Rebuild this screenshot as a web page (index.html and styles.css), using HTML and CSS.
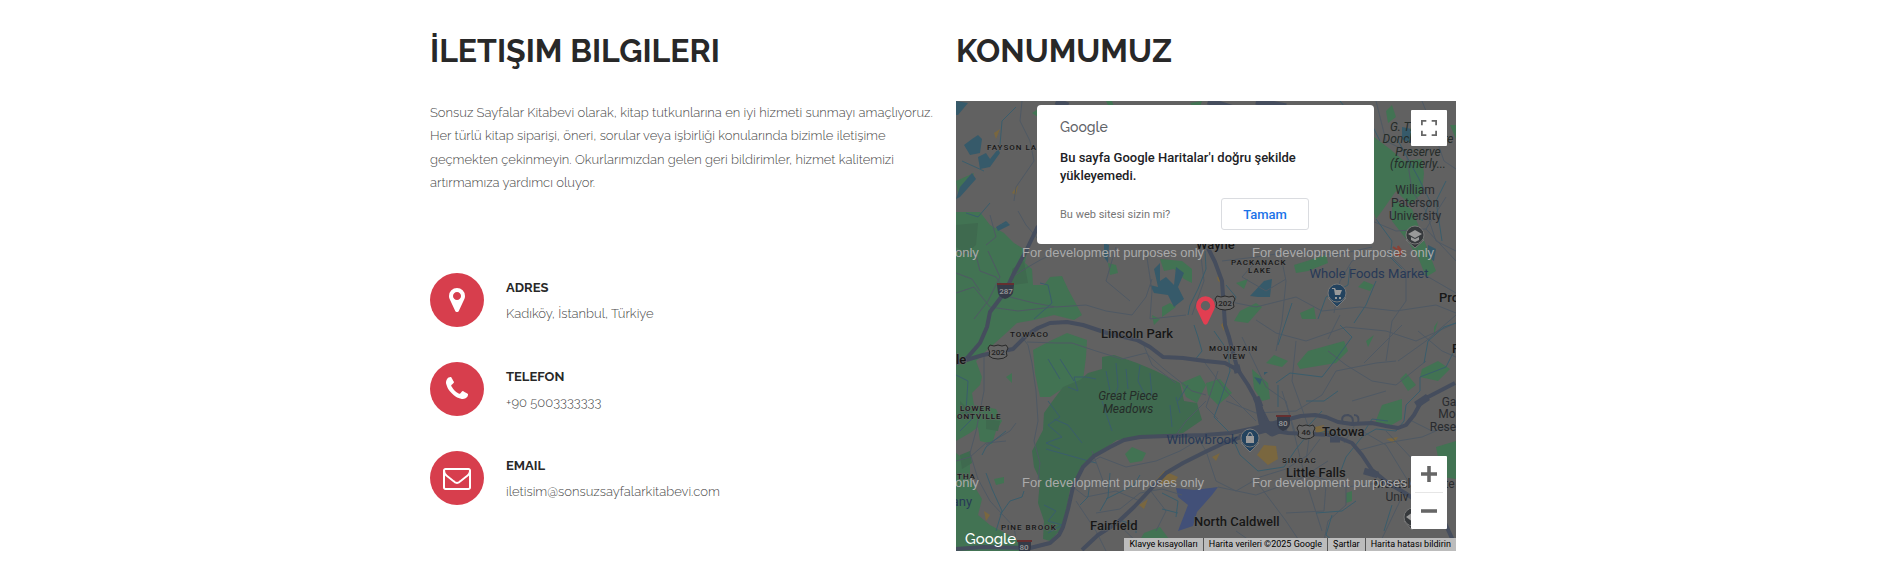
FILE: index.html
```html
<!DOCTYPE html>
<html lang="tr">
<head>
<meta charset="utf-8">
<meta name="viewport" content="width=device-width, initial-scale=1">
<title>İletişim</title>
<link rel="stylesheet" href="styles.css">
</head>
<body>
<main class="contact">
  <section class="column">
    <h2 class="heading">İLETIŞIM BILGILERI</h2>
    <p class="intro">Sonsuz Sayfalar Kitabevi olarak, kitap tutkunlarına en iyi hizmeti sunmayı amaçlıyoruz. Her türlü kitap siparişi, öneri, sorular veya işbirliği konularında bizimle iletişime geçmekten çekinmeyin. Okurlarımızdan gelen geri bildirimler, hizmet kalitemizi artırmamıza yardımcı oluyor.</p>
    <ul class="info-list">
      <li class="info">
        <span class="info-icon"><svg viewBox="0 0 1792 1792" aria-hidden="true"><path d="M1152 640q0-106-75-181t-181-75-181 75-75 181 75 181 181 75 181-75 75-181zm256 0q0 109-33 179l-364 774q-16 33-47.5 52t-67.5 19-67.5-19-46.5-52l-365-774q-33-70-33-179 0-212 150-362t362-150 362 150 150 362z"/></svg></span>
        <div class="info-body"><h3 class="info-title">ADRES</h3><p class="info-text">Kadıköy, İstanbul, Türkiye</p></div>
      </li>
      <li class="info">
        <span class="info-icon"><svg viewBox="0 0 1792 1792" aria-hidden="true"><path d="M1600 1240q0 27-10 70.5t-21 68.5q-21 50-122 106-94 51-186 51-27 0-53-3.5t-57.5-12.5-47-14.5-55.5-20.5-49-18q-98-35-175-83-127-79-264-216t-216-264q-48-77-83-175-3-9-18-49t-20.5-55.5-14.5-47-12.5-57.5-3.5-53q0-92 51-186 56-101 106-122 25-11 68.5-21t70.5-10q14 0 21 3 18 6 53 76 11 19 30 54t35 63.5 31 53.5q3 4 17.5 25t21.5 35.5 7 28.5q0 20-28.5 50t-62 55-62 53-28.5 46q0 9 5 22.5t8.5 20.5 14 24 11.5 19q76 137 174 235t235 174q2 1 19 11.5t24 14 20.5 8.5 22.5 5q18 0 46-28.5t53-62 55-62 50-28.5q14 0 28.5 7t35.5 21.5 25 17.5q25 15 53.5 31t63.5 35 54 30q70 35 76 53 3 7 3 21z"/></svg></span>
        <div class="info-body"><h3 class="info-title">TELEFON</h3><p class="info-text">+90 5003333333</p></div>
      </li>
      <li class="info">
        <span class="info-icon"><svg viewBox="0 0 1792 1792" aria-hidden="true"><path d="M1664 1504v-768q-32 36-69 66-268 206-426 338-51 43-83 67t-86.5 48.5-102.5 24.5h-2q-48 0-102.5-24.5t-86.5-48.5-83-67q-158-132-426-338-37-30-69-66v768q0 13 9.5 22.5t22.5 9.5h1472q13 0 22.5-9.5t9.5-22.5zm0-1051v-24.5l-.5-13-3-12.5-5.5-9-9-7.5-14-2.5h-1472q-13 0-22.5 9.5t-9.5 22.5q0 168 147 284 193 152 401 317 6 5 35 29.5t46 37.5 44.5 31.5 50.5 27.5 43 9h2q20 0 43-9t50.5-27.5 44.5-31.5 46-37.5 35-29.5q208-165 401-317 54-43 100.5-115.5t46.5-131.5zm128-37v1088q0 66-47 113t-113 47h-1472q-66 0-113-47t-47-113v-1088q0-66 47-113t113-47h1472q66 0 113 47t47 113z"/></svg></span>
        <div class="info-body"><h3 class="info-title">EMAIL</h3><p class="info-text">iletisim@sonsuzsayfalarkitabevi.com</p></div>
      </li>
    </ul>
  </section>

  <section class="column">
    <h2 class="heading">KONUMUMUZ</h2>
    <div class="map">
      <svg class="map-canvas" viewBox="0 0 500 450" preserveAspectRatio="xMidYMid slice" role="img" aria-label="Harita">
        <rect width="500" height="450" class="land"/>
        <g class="green">
          <path d="M0 111L24 111 34 124 48 132 58 142 71 150 69 162 76 168 77 184 88 184 94 176 106 175 112 188 126 214 118 219 98 214 78 219 61 222 48 234 30 250 20 260 26 276 24 284 16 292 18 304 40 308 46 320 40 330 36 343 24 340 22 326 14 332 0 340Z"/>
          <path d="M0 352L14 362 14 378 26 398 22 414 34 424 60 438 66 450 0 450Z"/>
          <path d="M77 249L94 240 111 232 131 239 130 256 127 279 109 286 94 296 84 296 79 272Z"/>
          <path class="park" d="M124 279L132 272 146 268 146 256 158 254 181 262 200 270 224 282 228 300 241 302 246 319 227 332 194 336 161 339 136 356 122 374 114 389 107 426 94 440 87 438 88 420 82 402 84 379 78 366 76 350 87 329 88 312 98 298 107 286Z"/>
          <path d="M225 282L244 274 250 284 241 302 230 296ZM152 162L160 164 162 172 154 174ZM204 158L226 160 236 168 236 182 228 178 218 168 208 170ZM206 206L214 202 220 206 206 216ZM196 214L204 218 198 224ZM176 346L190 352 186 360 174 362 169 353ZM188 432L204 426 222 450 180 446Z"/>
          <path d="M418 36L434 48 448 60 466 58 468 72 466 92 454 104 440 90 426 110 420 118 414 100ZM436 98L456 108 480 170 470 176 462 156 450 138 436 120ZM494 24L500 24 500 38Z"/>
          <path d="M338 164L370 154 372 162 352 170 340 172ZM284 210L300 202 306 206 292 222 278 220ZM344 212L358 206 360 218 346 218ZM408 180L418 184 414 190 402 186ZM280 182L292 178 288 188ZM478 226L482 220 478 234ZM410 240L418 234 412 246Z"/>
          <path d="M341 263L352 250 388 240 392 250 380 262 356 266 344 268ZM310 262L318 254 332 260 326 266ZM296 268L312 282 314 298 306 300 298 288ZM250 282L264 278 276 292 262 304 252 294ZM419 322L426 304 446 298 446 318 432 326ZM444 278L450 272 460 284 452 290ZM466 268L482 260 494 268 482 280 464 276ZM480 346L500 340 500 378 486 376ZM390 392L396 390 396 400 390 402Z"/>
          <path d="M150 0L156 0 158 6 152 4ZM76 12L82 8 82 16ZM0 80L18 72 14 84 2 92ZM430 10L436 4 440 16 432 22ZM50 276L56 272 56 282ZM38 378L48 376 48 382 40 384ZM234 2L246 0 242 12Z"/>
        </g>
        <g class="park">
          <path d="M0 124L22 122 20 144 10 152 0 146ZM56 168L68 160 72 182 56 184ZM4 300L14 310 20 306 14 316 4 312ZM30 318L44 320 42 330 30 328ZM4 354L14 350 16 362 6 368Z"/>
        </g>
        <g class="water">
          <path d="M8 44L16 38 22 34 26 38 24 52 14 54ZM22 56L30 52 34 58 42 48 44 52 34 66 24 68ZM0 0L12 2 2 14 0 14ZM40 126L50 120 54 124 42 130ZM16 72L4 86 0 98 4 96 20 78Z"/>
          <path d="M198 168L204 162 204 180 210 176 218 184 220 166 228 172 222 186 228 198 218 206 212 194 198 192 194 184 202 186ZM148 142L153 144 152 162 148 156ZM308 180L316 178 314 196 302 196 294 195ZM308 271L312 271 308 274ZM472 144L480 148 478 160 472 156ZM446 26L456 28 454 42 446 38ZM298 276L306 278 304 284Z"/>
        </g>
        <path class="airport" d="M220 387L238 389 262 386 256 394 241 411 237 425 222 430 232 404 222 396Z"/>
        <g class="yellow">
          <path d="M301 354L308 344 320 345 322 358 312 364ZM196 384L208 370 222 376 218 382ZM183 404L192 398 188 408ZM28 410L34 414 30 420ZM359 326L368 324 368 332 360 332ZM430 338L442 336 438 342ZM261 176L265 174 266 182 262 180ZM265 224L270 218 268 230ZM38 32L44 28 40 38ZM56 92L62 84 60 94ZM256 356L264 352 260 360Z"/>
        </g>
        <g class="minor">
          <path d="M0 150L20 154 24 170 40 176 54 196 78 202 100 206 130 204 150 210 176 214 190 196 196 178M56 176L72 166 86 158 100 152 118 150M32 150L44 176 32 200 18 218M0 172L16 178 24 190M66 0L64 20 74 40 78 60 60 86 58 100M104 0L96 24 84 40M62 110L70 124 82 138M34 114L40 136 30 144M0 192L18 186 34 206 62 210 98 206"/>
          <path d="M63 232L72 244 76 262 80 290 82 320 78 340 84 362 82 380M28 252L28 290 20 330 14 352 22 378 34 400 58 426 60 438M71 241L100 242 116 242 140 250 166 258 190 252 208 268 236 290 250 294M186 240L196 264 220 282"/>
          <path d="M127 366L144 356 170 366 200 360 224 350 244 338M117 386L130 396 160 390 184 400M140 412L164 408 184 392 206 388 226 394M194 389L210 410 200 430M136 350L150 388M161 422L184 444M120 400L140 430 150 450M240 334L250 350 260 380 280 390 304 376 330 368 352 354 364 338M262 386L300 394 344 378 372 360M326 290L340 334M249 262L270 290 300 320M262 270L250 306 262 318M286 236L310 286 330 300 350 380 366 430M300 219L320 232 350 240 390 226 430 230 460 240 500 222M340 240L336 280 354 330 350 360M270 300L300 312 340 310 366 294 380 270 420 262 440 260M372 250L390 264 416 280 440 284 470 260M442 260L470 240 500 214M408 262L446 224M388 342L400 322M396 300L430 290"/>
          <path d="M420 0L430 40 450 50 456 90 470 110 480 140 500 150M466 0L474 20 488 60 500 68M416 120L440 130 470 128 500 160M430 150L450 170 450 200 436 220 430 260M490 96L470 128M266 160L300 156 340 150 380 154 416 146M300 160L286 176 310 190 330 178M270 200L300 206 340 196 366 210 404 206 440 210 480 204 500 212M324 150L330 180 326 220 320 250M378 212L384 180 396 160 420 150M372 238L384 214M160 146L150 180 174 200M190 150L196 190 194 218 230 214M236 214L248 180 244 148M462 170L500 192M462 230L486 250 500 256"/>
          <path d="M366 450L372 420 390 404 390 380M300 380L330 420 350 450M280 430L300 444 330 438 372 444M344 370L390 386 440 380M400 350L430 342 466 336 480 330M406 330L430 344 452 380M430 330L460 362M370 384L368 410 330 412M444 400L420 450M452 318L476 330 500 326M250 300L230 320 220 334M0 360L14 356 30 342 50 340M30 344L54 330 60 322"/>
        </g>
        <g class="streams">
          <path d="M0 274L12 280 10 310 16 318 4 330M26 354L30 346 50 330M30 372L36 388 46 410 40 430M44 414L54 400 66 396 68 390M92 258L104 278M104 258L118 280M150 270L154 290M160 262L162 286 158 296M170 268L172 288M184 264L182 280 190 296M194 272L196 296M214 304L216 326M220 296L224 312M146 300L152 318 156 330M90 348L140 362M98 318L112 324 126 342M92 300L104 316 92 324 106 336 90 342 104 348M88 404L100 410 92 420 106 424 92 432M112 286L122 290 118 276 130 276 140 278M232 284L222 300M78 218L96 202 92 184 84 182"/>
          <path d="M249 150L250 168 242 188 234 204 232 214M238 224L242 236 246 250 238 260M258 230L272 250 274 270 264 300 258 316 276 334M276 336L284 354 302 370 328 366 340 348 350 336 370 330 382 334M320 282L334 272 366 276 380 258 396 236 384 224M322 284L322 306M384 372L390 356 406 336 420 328 440 330 448 320 450 304 464 290 464 276 490 266 498 250M406 334L416 318 432 320M468 262L472 240 488 226 500 222M350 300L368 300 382 290M366 310L344 334"/>
          <path d="M384 0L400 20 416 24 424 40M440 36L462 76 474 100 466 120M420 118L436 140 434 156 446 168M336 202L330 220 322 244M394 166L392 184 370 196 362 218M490 80L480 100 486 140M420 180L410 204 398 222M270 184L280 196 274 208M34 102L22 116 10 112M134 380L132 396 124 404M154 372L152 396 144 410M150 398L178 384 184 374M166 420L180 424 180 432M206 392L222 400 220 416M206 408L222 412M400 400L386 410 360 412M376 414L370 434 384 446M436 404L428 430M6 60L28 70M52 122L44 124M60 6L46 20 44 44"/>
        </g>
        <g class="highway">
          <path d="M82 125L70 150 57 174 49 191 34 211 31 226 24 242 11 257 0 262"/>
          <path d="M0 262L27 254 57 248 71 234 82 227 94 222 111 221 127 224 151 232 181 239 194 246 207 256 227 257 249 260 269 262 282 269 292 284 302 302 312 322"/>
          <path d="M0 448L27 446 74 447 94 442 103 434 107 426 112 408 117 386 127 366 138 355 154 346 168 339 184 336 211 335 249 334 275 332 299 327 329 319 345 315 359 314 370 316 382 321 396 323 416 322 430 325 442 327 450 324 458 314 464 303 472 296 499 282"/>
          <path d="M252 147L259 161 266 180 267 194 269 224 273 236 276 248 281 266"/>
          <path d="M126 449L142 434 161 422 178 406 194 389 210 372 227 362 249 351 268 342 282 337 312 329 332 332 376 334 396 342 406 354 416 369 432 382 449 392 470 406 489 422 499 444"/>
          <path class="ramp" d="M284 337L308 326 316 332 330 326M302 300L306 322 324 326M460 304L472 296M374 338L384 338M408 370L422 374M280 264L282 272M300 296L304 306M252 0L278 8M100 0L112 5M300 0L330 6"/>
          <path class="loop" d="M387 322Q384 314 392 314 399 316 396 323M398 314Q404 314 402 322"/>
        </g>

        <g class="shield">
          <path d="M41 184H58L57 192Q55 196 49 198 43 196 42 192Z"/><path d="M321 316H334V323Q333 328 327 330 322 328 321 323Z"/><path d="M62 441H75V447L74 450H63Z"/>
          <path class="us" d="M34 244Q38 246 42 244 46 246 50 244L52 247Q49 251 51 255 48 258 42 258 36 258 33 255 35 251 32 247Z"/>
          <path class="us" d="M261 195Q265 197 269 195 273 197 277 195L279 198Q276 202 278 206 275 209 269 209 263 209 260 206 262 202 259 198Z"/>
          <path class="us" d="M343 324Q346 326 350 324 354 326 357 324L359 327Q356 331 358 335 355 338 350 338 345 338 342 335 344 331 341 327Z"/>
          <path class="red" d="M41 183H58M320 315H335M61 440H76"/>
          <text x="50" y="193">287</text><text class="dark" x="42" y="254">202</text><text class="dark" x="269" y="205">202</text><text class="dark" x="350" y="334">46</text><text x="327" y="325">80</text><text x="68" y="449">80</text>
        </g>

        <g class="pin">
          <path class="school" d="M450 139L459 147 468 139Z"/><circle class="school" cx="459" cy="134" r="9"/>
          <path class="mark" d="M452 133L459 129 466 133 459 137ZM455 136V139L459 141 463 139V136L459 138Z"/>
          <path class="shop" d="M372 197L381 206 390 197Z"/><circle class="shop" cx="381" cy="192" r="9"/>
          <path class="mark" d="M376 187H379L380 189H386L384 194H379L378 188H376ZM379 196H381V198H379ZM383 196H385V198H383Z"/>
          <path class="shop" d="M285 342L294 351 303 342Z"/><circle class="shop" cx="294" cy="337" r="9"/>
          <path class="mark" d="M290 335H291Q292 331 294 331 296 331 297 335H298V342H290ZM292 335H296Q295 332 294 332 293 332 292 335Z" fill-rule="evenodd"/>
          <path class="school" d="M448 420L456 429 464 420Z"/><circle class="school" cx="457" cy="416" r="9"/><path class="mark" d="M450 416L457 411V421Z"/>
        </g>
        <path class="plane" d="M437 146L443 150 442 145 446 151 443 155M439 154L445 151"/>

        <g class="labels">
          <g class="area"><text x="31" y="49">FAYSON LA</text><text x="54" y="236">TOWACO</text><text x="4" y="310">LOWER</text><text x="1" y="318">ONTVILLE</text><text x="1" y="378">THA</text><text x="45" y="429">PINE BROOK</text><text x="275" y="164">PACKANACK</text><text x="292" y="172">LAKE</text><text x="253" y="250">MOUNTAIN</text><text x="267" y="258">VIEW</text><text x="326" y="362">SINGAC</text></g>
          <g class="town"><text x="145" y="237">Lincoln Park</text><text x="134" y="429">Fairfield</text><text x="238" y="425">North Caldwell</text><text x="330" y="376">Little Falls</text><text x="366" y="335">Totowa</text><text x="240" y="148">Wayne</text><text x="483" y="201">Pro</text><text x="496" y="252">P</text><text x="0" y="263">le</text></g>
          <g class="nature"><text x="172" y="299">Great Piece</text><text x="172" y="312">Meadows</text><text x="462" y="30">G. Thomas</text><text x="462" y="42">Donch Nature</text><text x="462" y="55">Preserve</text><text x="462" y="67">(formerly...</text></g>
          <g class="place"><text x="459" y="93">William</text><text x="459" y="106">Paterson</text><text x="459" y="119">University</text><text x="493" y="305">Ga</text><text x="491" y="317">Mo</text><text x="487" y="330">Rese</text><text x="458" y="387">Montclair State</text><text x="441" y="400">Univ</text></g>
          <g class="business"><text x="413" y="177">Whole Foods Market</text><text x="246" y="343">Willowbrook</text><text x="6" y="405">any</text></g>
        </g>
        <g class="watermark"><text x="-1" y="156">only</text><text x="66" y="156">For development purposes only</text><text x="296" y="156">For development purposes only</text><text x="-1" y="386">only</text><text x="66" y="386">For development purposes only</text><text x="296" y="386">For development purposes only</text></g>
        <svg class="marker" x="233" y="193" width="33" height="33" viewBox="0 0 1792 1792"><path d="M1152 640q0-106-75-181t-181-75-181 75-75 181 75 181 181 75 181-75 75-181zm256 0q0 109-33 179l-364 774q-16 33-47.5 52t-67.5 19-67.5-19-46.5-52l-365-774q-33-70-33-179 0-212 150-362t362-150 362 150 150 362z"/></svg>
      </svg>

      <div class="dialog" role="dialog" aria-label="Google Haritalar">
        <span class="dialog-logo">Google</span>
        <p class="dialog-message">Bu sayfa Google Haritalar'ı doğru şekilde yükleyemedi.</p>
        <div class="dialog-actions">
          <a class="dialog-link" href="#">Bu web sitesi sizin mi?</a>
          <button class="dialog-button" type="button">Tamam</button>
        </div>
      </div>

      <button class="fullscreen" type="button" aria-label="Tam ekran"><svg viewBox="0 0 18 18" aria-hidden="true"><path d="M0 0v6h2V2h4V0H0zm16 0h-4v2h4v4h2V0h-2zm0 16h-4v2h6v-6h-2v4zM2 12H0v6h6v-2H2v-4z"/></svg></button>
      <div class="zoom">
        <button class="zoom-button" type="button" aria-label="Yakınlaştır"><svg viewBox="0 0 18 18" aria-hidden="true"><path d="M18 7h-7V0H7v7H0v4h7v7h4v-7h7z"/></svg></button>
        <button class="zoom-button" type="button" aria-label="Uzaklaştır"><svg viewBox="0 0 18 18" aria-hidden="true"><path d="M0 7h18v4H0z"/></svg></button>
      </div>
      <span class="map-logo">Google</span>
      <div class="credits">
        <button class="credit" type="button">Klavye kısayolları</button>
        <span class="credit">Harita verileri ©2025 Google</span>
        <a class="credit" href="#">Şartlar</a>
        <a class="credit" href="#">Harita hatası bildirin</a>
      </div>
    </div>
  </section>
</main>
</body>
</html>
```
FILE: styles.css
```css
* { box-sizing: border-box; }
body {
  margin: 0;
  background: #fff;
  color: #484848;
  font-family: Raleway, Lato, "Open Sans", sans-serif;
  font-size: 13px;
  font-weight: 300;
}
h2, h3, p, ul { margin: 0; padding: 0; }
button { border: 0; padding: 0; background: none; font: inherit; color: inherit; cursor: pointer; }
a { color: inherit; text-decoration: none; }

.contact {
  display: grid;
  grid-template-columns: repeat(2, minmax(0, 1fr));
  gap: 26px;
  max-width: 1031px;
  margin: 0 auto;
  padding: 31px 5px 30px 0;
}
.heading {
  margin-bottom: 30px;
  color: #282828;
  font-size: 32px;
  font-weight: 700;
  line-height: 40px;
}
.intro { margin-right: -10px; line-height: 1.8; }

.info-list {
  display: grid;
  gap: 35px;
  margin-top: 78px;
  list-style: none;
}
.info { display: flex; align-items: center; gap: 22px; }
.info-icon {
  display: grid;
  place-items: center;
  flex: none;
  width: 54px;
  height: 54px;
  border-radius: 50%;
  background: #d73e4d;
}
.info-icon svg { width: 28px; height: 28px; fill: #fff; }
.info-body { padding-top: 2px; }
.info-title { color: #282828; font-size: 13px; font-weight: 700; line-height: 26px; }
.info-text { line-height: 26px; }

.map { position: relative; overflow: hidden; font-family: Roboto, sans-serif; font-weight: 400; }
.map-canvas { display: block; width: 100%; height: auto; }

.land { fill: #616161; }
.green { fill: #427353; }
.park { fill: #3f6a4f; }
.water { fill: #365a6a; }
.airport { fill: #425078; }
.yellow { fill: #7a673f; }
.minor { fill: none; stroke: #4f5964; stroke-width: 1; }
.streams { fill: none; stroke: #3a5d6c; stroke-width: 1; }
.highway { fill: none; stroke: #454d5d; stroke-width: 4; stroke-linejoin: round; }
.highway .ramp { stroke-width: 7; }
.highway .loop { stroke-width: 2; }
.shield { fill: #353b48; font-size: 8px; font-weight: 500; text-anchor: middle; }
.shield .us { fill: #666; stroke: #292929; }
.shield .red { stroke: #652f30; stroke-width: 2; }
.shield text { fill: #999; }
.shield .dark { fill: #222; }
.pin .school { fill: #36393c; stroke: #777; }
.pin .shop { fill: #23435f; stroke: #777; }
.pin .mark { fill: #999; }
.plane { fill: none; stroke: #884237; stroke-width: 2; }

.labels { fill: #171717; stroke: #666; stroke-width: 1px; paint-order: stroke; }
.area { font-size: 8px; font-weight: 500; letter-spacing: 1px; }
.town { font-size: 13px; font-weight: 500; }
.nature { fill: #252c29; font-size: 12px; font-style: italic; text-anchor: middle; }
.place { fill: #292b2e; font-size: 12px; text-anchor: middle; }
.business { fill: #273957; font-size: 13px; text-anchor: middle; }
.nature, .place, .business { stroke-width: 0; }
.watermark { fill: #aaa; font-family: "Liberation Sans", Arial, sans-serif; font-size: 13px; }
.marker { fill: #e23e51; }

.dialog {
  position: absolute;
  top: 4px;
  left: 50%;
  width: 337px;
  margin-left: -169px;
  padding: 12px 24px 14px 23px;
  border-radius: 4px;
  background: #fff;
  color: #202124;
}
.dialog-logo { display: block; color: #5f6368; font-family: Raleway, Lato, sans-serif; font-size: 14px; font-weight: 500; line-height: 20px; }
.dialog-message { max-width: 240px; margin-top: 12px; font-size: 13px; font-weight: 500; line-height: 18px; }
.dialog-actions { display: flex; align-items: center; justify-content: space-between; margin-top: 13px; padding-right: 41px; }
.dialog-link { color: #757575; font-size: 11px; }
.dialog-button { width: 88px; height: 32px; border: 1px solid #dadce0; border-radius: 3px; color: #1a73e8; font-size: 13px; font-weight: 500; }

.fullscreen, .zoom { position: absolute; right: 9px; width: 36px; background: #fff; border-radius: 1px; }
.fullscreen { top: 9px; height: 36px; display: grid; place-items: center; }
.fullscreen svg, .zoom-button svg { width: 16px; height: 16px; fill: #666; }
.zoom { bottom: 22px; }
.zoom-button { display: grid; place-items: center; width: 36px; height: 36px; }
.zoom-button + .zoom-button::before { content: ""; width: 28px; height: 1px; background: #e6e6e6; }
.zoom-button + .zoom-button { grid-template-rows: 1px 1fr; height: 37px; }

.map-logo { position: absolute; left: 9px; bottom: 1px; color: #fff; font-family: Raleway, Lato, sans-serif; font-size: 15px; font-weight: 500; line-height: 22px; }
.credits { position: absolute; right: 0; bottom: 0; display: flex; color: #000; font-size: 9px; line-height: 13px; }
.credit { padding: 0 5px; background: #bcbcbc; white-space: nowrap; }
.credit + .credit { border-left: 1px solid #555; }
```
